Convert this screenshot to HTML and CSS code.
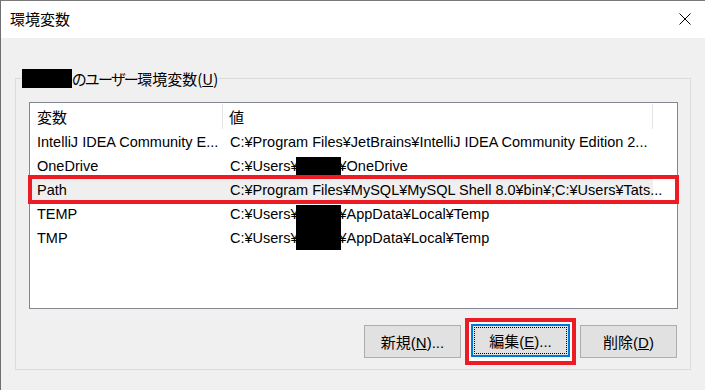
FILE: index.html
```html
<!DOCTYPE html>
<html lang="ja">
<head>
    <meta charset="UTF-8">
    <title>環境変数</title>
    <link rel="stylesheet" href="styles.css">
</head>
<body>
    <div class="window">
        <div class="titlebar">
            <span class="title">環境変数</span>
            <svg class="close" width="12" height="12" viewBox="0 0 12 12">
                <path d="M0.5 0.5L11.5 11.5M11.5 0.5L0.5 11.5" stroke="#000" stroke-width="1" fill="none"/>
            </svg>
        </div>
        <div class="client">
            <fieldset class="group">
                <legend><span class="redact-name"></span><span class="kana"><span class="narrow">のユーザー</span>環境変数(<u>U</u>)</span></legend>
                <div class="list">
                    <div class="row header">
                        <div class="cell col1">変数</div>
                        <div class="cell col2">値</div>
                    </div>
                    <div class="row">
                        <div class="cell col1">IntelliJ IDEA Community E...</div>
                        <div class="cell col2">C:¥Program Files¥JetBrains¥IntelliJ IDEA Community Edition 2...</div>
                    </div>
                    <div class="row">
                        <div class="cell col1">OneDrive</div>
                        <div class="cell col2">C:¥Users¥<span class="user"></span>¥OneDrive</div>
                    </div>
                    <div class="row selected">
                        <div class="cell col1">Path</div>
                        <div class="cell col2">C:¥Program Files¥MySQL¥MySQL Shell 8.0¥bin¥;C:¥Users¥Tats...</div>
                    </div>
                    <div class="row">
                        <div class="cell col1">TEMP</div>
                        <div class="cell col2">C:¥Users¥<span class="user tall"></span>¥AppData¥Local¥Temp</div>
                    </div>
                    <div class="row">
                        <div class="cell col1">TMP</div>
                        <div class="cell col2">C:¥Users¥<span class="user hidden"></span>¥AppData¥Local¥Temp</div>
                    </div>
                    <div class="mark-row"></div>
                </div>
                <div class="buttons">
                    <button class="btn">新規(<u>N</u>)...</button>
                    <span class="mark-btn"><button class="btn focused">編集(<u>E</u>)...</button></span>
                    <button class="btn">削除(<u>D</u>)</button>
                </div>
            </fieldset>
        </div>
    </div>
</body>
</html>
```

FILE: styles.css
```css
html, body {
    margin: 0;
    padding: 0;
    background-color: #f0f0f0;
}

body {
    font-family: "Liberation Sans", "Noto Sans CJK JP", sans-serif;
    font-size: 15px;
    color: #000;
}

.window {
    width: 705px;
    height: 390px;
    box-sizing: border-box;
    border-left: 1px solid #6f6f6f;
    border-top: 1px solid #7a7a7a;
    background-color: #f0f0f0;
    overflow: hidden;
}

.titlebar {
    height: 37px;
    background-color: #fff;
    display: flex;
    align-items: center;
    justify-content: space-between;
    padding: 0 14px 0 9px;
}

.title {
    font-family: "Noto Sans CJK JP", sans-serif;
    font-size: 15px;
    padding-bottom: 2px;
}

.close {
    display: block;
    margin-bottom: 2px;
}

.client {
    padding: 30px 14px 0 14px;
}

.group {
    margin: 0;
    height: 302px;
    box-sizing: border-box;
    border: 1px solid #dcdcdc;
    padding: 14px 12px 0 13px;
}

.group legend {
    padding: 0;
    margin-left: -7px;
    display: flex;
    align-items: center;
    height: 20px;
}

.redact-name {
    display: inline-block;
    width: 50px;
    height: 19px;
    background-color: #000;
}

.kana {
    font-family: "Noto Sans CJK JP", sans-serif;
    font-feature-settings: "palt";
}

.kana .narrow {
    letter-spacing: -1.5px;
}

.list {
    position: relative;
    height: 207px;
    box-sizing: border-box;
    border: 1px solid #828790;
    background-color: #fff;
    font-size: 14.5px;
}

.row {
    display: flex;
    height: 24px;
    align-items: center;
    white-space: nowrap;
}

.row.header {
    height: 27px;
    font-size: 15px;
}

.cell {
    box-sizing: border-box;
    padding-left: 7px;
}

.col1 {
    width: 193px;
}

.col2 {
    width: 430px;
}

.header .cell {
    font-family: "Noto Sans CJK JP", sans-serif;
    border-right: 1px solid #e5e5e5;
    height: 25px;
    line-height: 25px;
}

.header .col2 {
    padding-left: 6px;
}

.selected {
    width: 623px;
    background-color: #efefef;
}

.user {
    display: inline-block;
    position: relative;
    width: 45px;
    height: 19px;
    margin: 0 -2px 0 -3px;
    vertical-align: -5px;
    background-color: #000;
}

.user.tall::after {
    content: "";
    position: absolute;
    left: 0;
    top: 0;
    width: 100%;
    height: 45px;
    background-color: #000;
}

.user.hidden {
    background-color: transparent;
}

.mark-row {
    position: absolute;
    left: -2px;
    top: 72px;
    width: 643px;
    height: 21px;
    border: 4px solid #ed1c24;
}

.buttons {
    display: flex;
    justify-content: flex-end;
    gap: 11px;
    margin-top: 16px;
    padding-right: 1px;
}

.btn {
    width: 97px;
    height: 33px;
    box-sizing: border-box;
    border: 1px solid #adadad;
    background-color: #e1e1e1;
    font-family: "Liberation Sans", "Noto Sans CJK JP", sans-serif;
    font-size: 15px;
    color: #000;
    padding: 0;
}

.mark-btn {
    display: inline-block;
    margin: -7px;
    padding: 2px;
    border: 4px solid #ed1c24;
    background-color: #fff;
}

.btn.focused {
    display: block;
    width: 99px;
    border: 2px solid #0078d7;
    outline: 1px dotted #000;
    outline-offset: -4px;
}
```
